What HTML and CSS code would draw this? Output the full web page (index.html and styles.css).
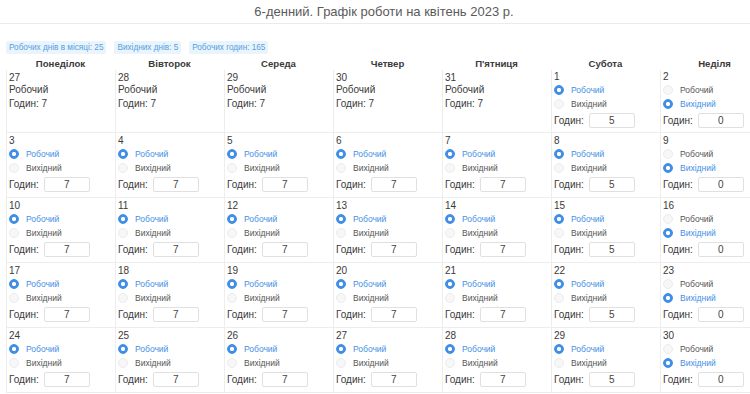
FILE: index.html
```html
<!DOCTYPE html>
<html lang="uk">
<head>
<meta charset="utf-8">
<title>Графік роботи</title>
<link rel="stylesheet" href="styles.css">
</head>
<body>
<div class="page">
  <h1 class="title">6-денний. Графік роботи на квітень 2023 р.</h1>
  <div class="badges">
    <span class="badge">Робочих днів в місяці: 25</span>
    <span class="badge">Вихідних днів: 5</span>
    <span class="badge">Робочих годин: 165</span>
  </div>
  <div class="grid">
    <div class="head">Понеділок</div>
    <div class="head">Вівторок</div>
    <div class="head">Середа</div>
    <div class="head">Четвер</div>
    <div class="head">П'ятниця</div>
    <div class="head">Субота</div>
    <div class="head">Неділя</div>

    <div class="cell first prev"><div class="num">27</div><div class="kind">Робочий</div><div class="hrs">Годин: 7</div></div>
    <div class="cell first prev"><div class="num">28</div><div class="kind">Робочий</div><div class="hrs">Годин: 7</div></div>
    <div class="cell first prev"><div class="num">29</div><div class="kind">Робочий</div><div class="hrs">Годин: 7</div></div>
    <div class="cell first prev"><div class="num">30</div><div class="kind">Робочий</div><div class="hrs">Годин: 7</div></div>
    <div class="cell first prev"><div class="num">31</div><div class="kind">Робочий</div><div class="hrs">Годин: 7</div></div>
    <div class="cell first"><div class="num">1</div><label class="opt on"><input type="radio" name="d1" checked>Робочий</label><label class="opt"><input type="radio" name="d1">Вихідний</label><div class="hours">Годин:<input class="hin" type="text" value="5"></div></div>
    <div class="cell first"><div class="num">2</div><label class="opt"><input type="radio" name="d2">Робочий</label><label class="opt on"><input type="radio" name="d2" checked>Вихідний</label><div class="hours">Годин:<input class="hin" type="text" value="0"></div></div>

    <div class="cell"><div class="num">3</div><label class="opt on"><input type="radio" name="d3" checked>Робочий</label><label class="opt"><input type="radio" name="d3">Вихідний</label><div class="hours">Годин:<input class="hin" type="text" value="7"></div></div>
    <div class="cell"><div class="num">4</div><label class="opt on"><input type="radio" name="d4" checked>Робочий</label><label class="opt"><input type="radio" name="d4">Вихідний</label><div class="hours">Годин:<input class="hin" type="text" value="7"></div></div>
    <div class="cell"><div class="num">5</div><label class="opt on"><input type="radio" name="d5" checked>Робочий</label><label class="opt"><input type="radio" name="d5">Вихідний</label><div class="hours">Годин:<input class="hin" type="text" value="7"></div></div>
    <div class="cell"><div class="num">6</div><label class="opt on"><input type="radio" name="d6" checked>Робочий</label><label class="opt"><input type="radio" name="d6">Вихідний</label><div class="hours">Годин:<input class="hin" type="text" value="7"></div></div>
    <div class="cell"><div class="num">7</div><label class="opt on"><input type="radio" name="d7" checked>Робочий</label><label class="opt"><input type="radio" name="d7">Вихідний</label><div class="hours">Годин:<input class="hin" type="text" value="7"></div></div>
    <div class="cell"><div class="num">8</div><label class="opt on"><input type="radio" name="d8" checked>Робочий</label><label class="opt"><input type="radio" name="d8">Вихідний</label><div class="hours">Годин:<input class="hin" type="text" value="5"></div></div>
    <div class="cell"><div class="num">9</div><label class="opt"><input type="radio" name="d9">Робочий</label><label class="opt on"><input type="radio" name="d9" checked>Вихідний</label><div class="hours">Годин:<input class="hin" type="text" value="0"></div></div>

    <div class="cell"><div class="num">10</div><label class="opt on"><input type="radio" name="d10" checked>Робочий</label><label class="opt"><input type="radio" name="d10">Вихідний</label><div class="hours">Годин:<input class="hin" type="text" value="7"></div></div>
    <div class="cell"><div class="num">11</div><label class="opt on"><input type="radio" name="d11" checked>Робочий</label><label class="opt"><input type="radio" name="d11">Вихідний</label><div class="hours">Годин:<input class="hin" type="text" value="7"></div></div>
    <div class="cell"><div class="num">12</div><label class="opt on"><input type="radio" name="d12" checked>Робочий</label><label class="opt"><input type="radio" name="d12">Вихідний</label><div class="hours">Годин:<input class="hin" type="text" value="7"></div></div>
    <div class="cell"><div class="num">13</div><label class="opt on"><input type="radio" name="d13" checked>Робочий</label><label class="opt"><input type="radio" name="d13">Вихідний</label><div class="hours">Годин:<input class="hin" type="text" value="7"></div></div>
    <div class="cell"><div class="num">14</div><label class="opt on"><input type="radio" name="d14" checked>Робочий</label><label class="opt"><input type="radio" name="d14">Вихідний</label><div class="hours">Годин:<input class="hin" type="text" value="7"></div></div>
    <div class="cell"><div class="num">15</div><label class="opt on"><input type="radio" name="d15" checked>Робочий</label><label class="opt"><input type="radio" name="d15">Вихідний</label><div class="hours">Годин:<input class="hin" type="text" value="5"></div></div>
    <div class="cell"><div class="num">16</div><label class="opt"><input type="radio" name="d16">Робочий</label><label class="opt on"><input type="radio" name="d16" checked>Вихідний</label><div class="hours">Годин:<input class="hin" type="text" value="0"></div></div>

    <div class="cell"><div class="num">17</div><label class="opt on"><input type="radio" name="d17" checked>Робочий</label><label class="opt"><input type="radio" name="d17">Вихідний</label><div class="hours">Годин:<input class="hin" type="text" value="7"></div></div>
    <div class="cell"><div class="num">18</div><label class="opt on"><input type="radio" name="d18" checked>Робочий</label><label class="opt"><input type="radio" name="d18">Вихідний</label><div class="hours">Годин:<input class="hin" type="text" value="7"></div></div>
    <div class="cell"><div class="num">19</div><label class="opt on"><input type="radio" name="d19" checked>Робочий</label><label class="opt"><input type="radio" name="d19">Вихідний</label><div class="hours">Годин:<input class="hin" type="text" value="7"></div></div>
    <div class="cell"><div class="num">20</div><label class="opt on"><input type="radio" name="d20" checked>Робочий</label><label class="opt"><input type="radio" name="d20">Вихідний</label><div class="hours">Годин:<input class="hin" type="text" value="7"></div></div>
    <div class="cell"><div class="num">21</div><label class="opt on"><input type="radio" name="d21" checked>Робочий</label><label class="opt"><input type="radio" name="d21">Вихідний</label><div class="hours">Годин:<input class="hin" type="text" value="7"></div></div>
    <div class="cell"><div class="num">22</div><label class="opt on"><input type="radio" name="d22" checked>Робочий</label><label class="opt"><input type="radio" name="d22">Вихідний</label><div class="hours">Годин:<input class="hin" type="text" value="5"></div></div>
    <div class="cell"><div class="num">23</div><label class="opt"><input type="radio" name="d23">Робочий</label><label class="opt on"><input type="radio" name="d23" checked>Вихідний</label><div class="hours">Годин:<input class="hin" type="text" value="0"></div></div>

    <div class="cell"><div class="num">24</div><label class="opt on"><input type="radio" name="d24" checked>Робочий</label><label class="opt"><input type="radio" name="d24">Вихідний</label><div class="hours">Годин:<input class="hin" type="text" value="7"></div></div>
    <div class="cell"><div class="num">25</div><label class="opt on"><input type="radio" name="d25" checked>Робочий</label><label class="opt"><input type="radio" name="d25">Вихідний</label><div class="hours">Годин:<input class="hin" type="text" value="7"></div></div>
    <div class="cell"><div class="num">26</div><label class="opt on"><input type="radio" name="d26" checked>Робочий</label><label class="opt"><input type="radio" name="d26">Вихідний</label><div class="hours">Годин:<input class="hin" type="text" value="7"></div></div>
    <div class="cell"><div class="num">27</div><label class="opt on"><input type="radio" name="d27" checked>Робочий</label><label class="opt"><input type="radio" name="d27">Вихідний</label><div class="hours">Годин:<input class="hin" type="text" value="7"></div></div>
    <div class="cell"><div class="num">28</div><label class="opt on"><input type="radio" name="d28" checked>Робочий</label><label class="opt"><input type="radio" name="d28">Вихідний</label><div class="hours">Годин:<input class="hin" type="text" value="7"></div></div>
    <div class="cell"><div class="num">29</div><label class="opt on"><input type="radio" name="d29" checked>Робочий</label><label class="opt"><input type="radio" name="d29">Вихідний</label><div class="hours">Годин:<input class="hin" type="text" value="5"></div></div>
    <div class="cell"><div class="num">30</div><label class="opt"><input type="radio" name="d30">Робочий</label><label class="opt on"><input type="radio" name="d30" checked>Вихідний</label><div class="hours">Годин:<input class="hin" type="text" value="0"></div></div>
  </div>
</div>
</body>
</html>
```
FILE: styles.css
```css
* {
  box-sizing: border-box;
}

html, body {
  margin: 0;
  padding: 0;
  background: #fff;
  overflow: hidden;
}

body {
  font-family: "Liberation Sans", Arial, sans-serif;
  color: #3a3a3a;
}

.page {
  width: 768px;
}

.title {
  margin: 0;
  height: 24px;
  line-height: 23px;
  font-size: 13px;
  font-weight: normal;
  color: #5a5a5a;
  text-align: center;
  border-bottom: 1px solid #ebebeb;
}

.badges {
  display: flex;
  gap: 8px;
  padding: 17px 0 0 6px;
}

.badge {
  display: block;
  height: 13px;
  line-height: 13px;
  padding: 0 3px;
  font-size: 8.2px;
  color: #55a0e0;
  background: #e9f4fd;
  border-radius: 2px;
}

.grid {
  display: grid;
  grid-template-columns: repeat(7, 109px);
  margin: 3px 0 0 6px;
}

.head {
  height: 13px;
  line-height: 13px;
  font-size: 9.6px;
  font-weight: bold;
  color: #3a3a3a;
  text-align: center;
}

.cell {
  height: 65px;
  padding: 2px 2px 0 2px;
  border-left: 1px solid #ededed;
  border-bottom: 1px solid #ededed;
  font-size: 10px;
}

.cell.first {
  height: 63px;
  padding-top: 1px;
}

.num {
  height: 12px;
  line-height: 12px;
  font-size: 10px;
}

.prev .num {
  margin-top: 1px;
}

.kind {
  line-height: 11px;
  font-size: 10px;
}

.hrs {
  margin-top: 2px;
  line-height: 13px;
  font-size: 10px;
}

.opt {
  display: flex;
  align-items: center;
  height: 14px;
  font-size: 8.5px;
  color: #555;
}

.opt.on {
  color: #3f8fe6;
}

.opt input {
  appearance: none;
  -webkit-appearance: none;
  width: 10px;
  height: 10px;
  margin: 0 7px 0 0;
  border-radius: 50%;
  border: 1px solid #ececec;
  background: #f7f7f7;
}

.opt input:checked {
  border-color: #3f8fe6;
  background: radial-gradient(circle, #fff 0 1.8px, #3f8fe6 2.4px);
}

.hours {
  display: flex;
  align-items: center;
  gap: 5px;
  margin-top: 2px;
  height: 15px;
  font-size: 10px;
}

.hin {
  width: 46px;
  height: 15px;
  padding: 0;
  border: 1px solid #e0e0e0;
  border-radius: 2px;
  font-family: "Liberation Sans", Arial, sans-serif;
  font-size: 10px;
  color: #444;
  text-align: center;
  background: #fff;
}
```
